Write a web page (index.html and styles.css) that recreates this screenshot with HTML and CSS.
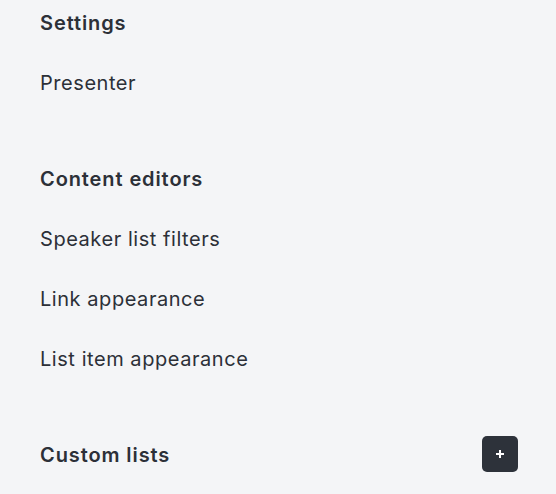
FILE: index.html
```html
<!DOCTYPE html>
<html>
<head>
<meta charset="utf-8">
<link rel="stylesheet" href="styles.css">
</head>
<body>
<div class="page">
  <section class="section">
    <div class="heading-row"><h2 class="heading">Settings</h2></div>
    <ul class="items">
      <li class="item">Presenter</li>
    </ul>
  </section>
  <section class="section">
    <div class="heading-row"><h2 class="heading">Content editors</h2></div>
    <ul class="items">
      <li class="item">Speaker list filters</li>
      <li class="item">Link appearance</li>
      <li class="item">List item appearance</li>
    </ul>
  </section>
  <section class="section">
    <div class="heading-row">
      <h2 class="heading">Custom lists</h2>
      <button class="add-btn" aria-label="Add">
        <svg width="10" height="10" viewBox="0 0 10 10"><path d="M5 1v8M1 5h8" stroke="#fff" stroke-width="2" stroke-linecap="butt"/></svg>
      </button>
    </div>
  </section>
</div>
</body>
</html>
```
FILE: styles.css
```css
html, body {
  margin: 0;
  padding: 0;
  background: #f4f5f7;
}
body {
  font-family: Inter, "Noto Sans", sans-serif;
  color: #2c3038;
  height: 494px;
  overflow: hidden;
}
.page {
  padding: 4px 38px 0 40px;
  display: flex;
  flex-direction: column;
  gap: 48px;
}
.heading-row {
  height: 36px;
  display: flex;
  align-items: center;
  justify-content: space-between;
}
.heading {
  margin: 0;
  font-size: 20px;
  font-weight: 600;
  line-height: 24px;
  letter-spacing: 0.9px;
  padding-top: 2px;
}
.items {
  list-style: none;
  margin: 12px 0 0;
  padding: 0;
}
.item {
  height: 60px;
  display: flex;
  align-items: center;
  font-size: 20px;
  line-height: 24px;
  font-weight: 400;
  letter-spacing: 0.55px;
  padding-top: 2px;
  box-sizing: border-box;
}
.add-btn {
  width: 36px;
  height: 36px;
  border: none;
  border-radius: 5px;
  background: #2d323a;
  padding: 0;
  display: flex;
  align-items: center;
  justify-content: center;
}
```
